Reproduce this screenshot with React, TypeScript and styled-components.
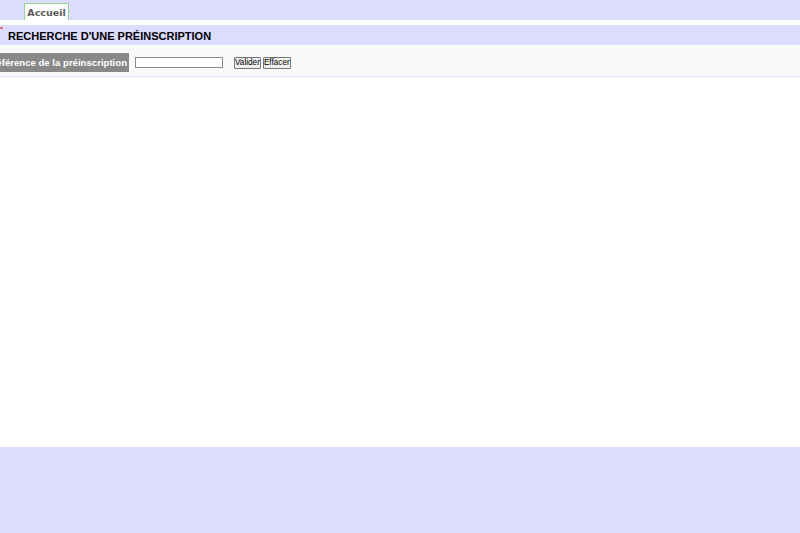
import React from "react";
import styled, { createGlobalStyle } from "styled-components";

const Global = createGlobalStyle`
  html, body { margin: 0; padding: 0; background: #fff; }
  body { font-family: "Liberation Sans", Arial, sans-serif; }
  #root { min-height: 533px; display: flex; flex-direction: column; }
`;

const Page = styled.div`
  display: flex;
  flex-direction: column;
  min-height: 533px;
  overflow: hidden;
`;

const TopBar = styled.div`
  height: 20px;
  background: #dcdcfe;
  display: flex;
  align-items: flex-end;
  padding-left: 24px;
`;

const Tab = styled.div`
  height: 17px;
  width: 45px;
  box-sizing: border-box;
  background: #fff;
  border: 1px solid #8cd88c;
  border-bottom: none;
  display: flex;
  align-items: center;
  justify-content: center;
  font-family: "DejaVu Sans", Verdana, sans-serif;
  font-weight: bold;
  font-size: 9.5px;
  color: #5a5a5a;
`;

const TitleBand = styled.div`
  margin-top: 5px;
  height: 20px;
  background: #dcdcfe;
  display: flex;
  align-items: center;
  padding-left: 8px;
  padding-top: 1px;
  box-sizing: border-box;
  position: relative;
  font-weight: bold;
  font-size: 11px;
  color: #000;
`;

const Mark = styled.span`
  position: absolute;
  left: 0;
  top: 2px;
  width: 3px;
  height: 2px;
  background: #e07070;
`;

const SearchRow = styled.div`
  margin-top: 1px;
  height: 31px;
  box-sizing: border-box;
  background: #fafafa;
  border-bottom: 1px solid #dcdcfe;
  display: flex;
  align-items: center;
  padding-top: 2px;
`;

const Label = styled.div`
  height: 19px;
  margin-left: -2px;
  padding: 0 2px 0 0;
  background: #888;
  color: #fff;
  font-weight: bold;
  font-size: 9.6px;
  display: flex;
  align-items: center;
  white-space: nowrap;
  width: 131px;
  justify-content: flex-end;
  box-sizing: border-box;
  flex-shrink: 0;
`;

const Input = styled.input`
  margin-left: 6px;
  width: 88px;
  height: 11px;
  box-sizing: border-box;
  border: 1px solid #8a8a8a;
  padding: 0;
  background: #fff;
`;

const Buttons = styled.div`
  display: flex;
  gap: 2px;
  margin-left: 11px;
  padding-top: 1px;
`;

const Btn = styled.button`
  height: 12px;
  padding: 0;
  font-family: "Liberation Sans", Arial, sans-serif;
  font-size: 8.2px;
  line-height: 10px;
  background: #f0f0f0;
  border: 1px solid #767676;
  border-radius: 1px;
  color: #000;
  white-space: nowrap;
`;

const Content = styled.div`
  flex: 1;
  background: #fff;
  min-height: 370px;
`;

const Footer = styled.div`
  height: 86px;
  background: #dcdcfe;
`;

export default function App() {
  return (
    <Page>
      <Global />
      <TopBar>
        <Tab>Accueil</Tab>
      </TopBar>
      <TitleBand>
        <Mark />
        RECHERCHE D'UNE PRÉINSCRIPTION
      </TitleBand>
      <SearchRow>
        <Label>Référence de la préinscription</Label>
        <Input type="text" />
        <Buttons>
          <Btn>Valider</Btn>
          <Btn>Effacer</Btn>
        </Buttons>
      </SearchRow>
      <Content />
      <Footer />
    </Page>
  );
}
